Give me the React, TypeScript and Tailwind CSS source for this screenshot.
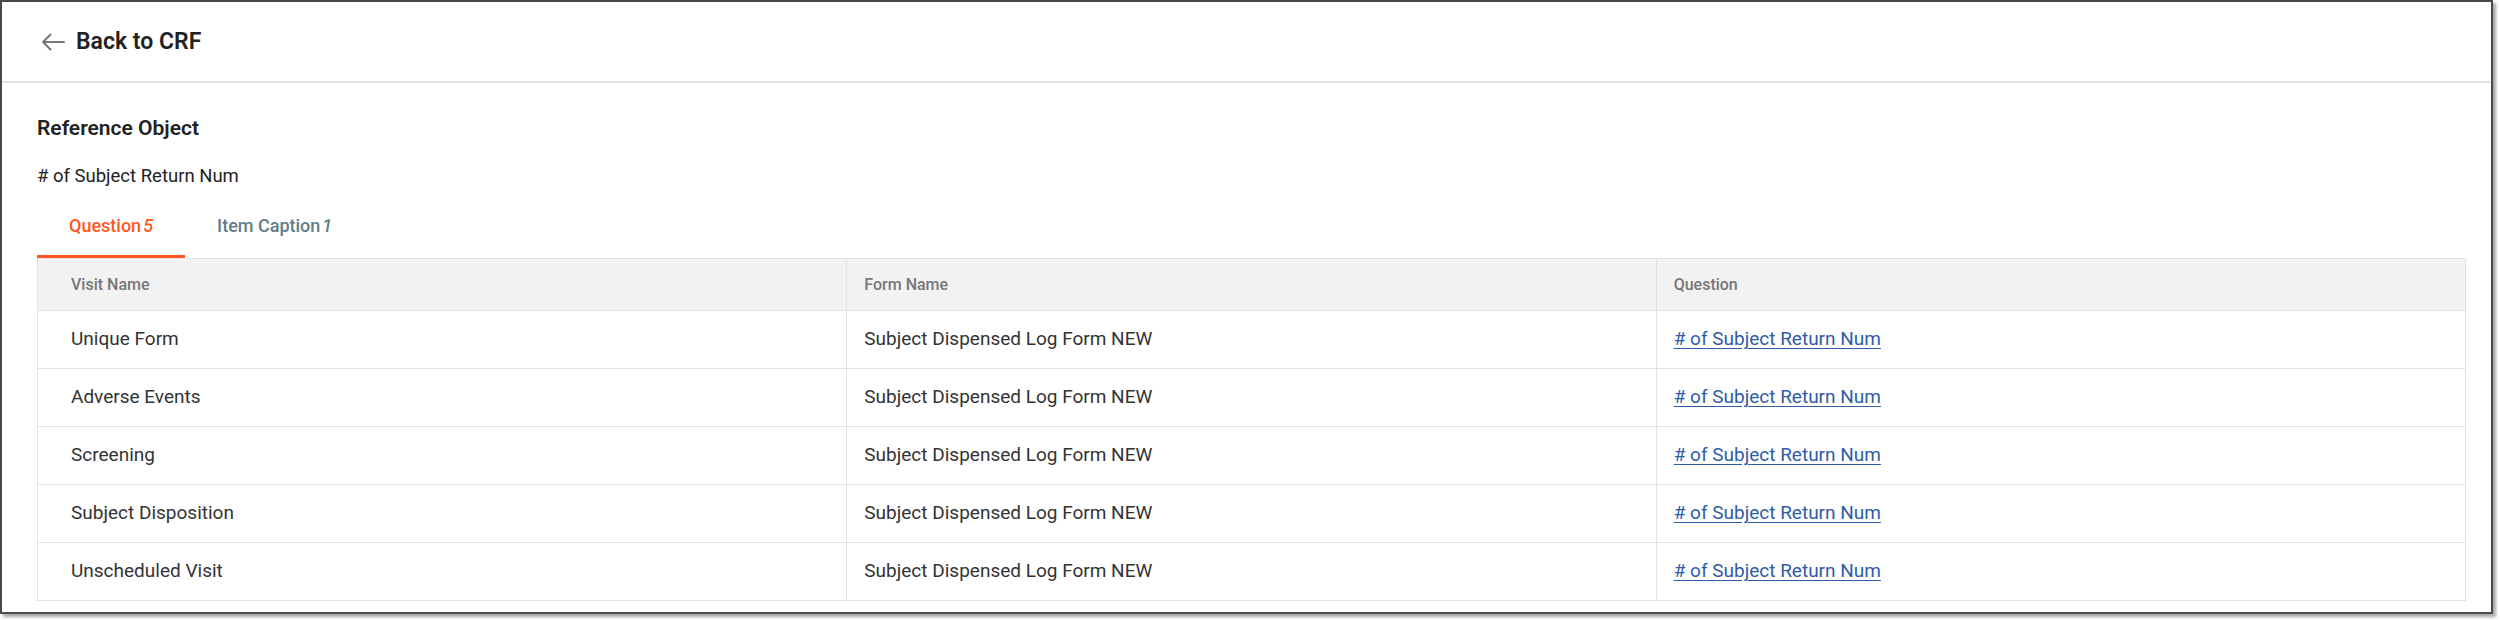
import { useState } from "react";

const rows = [
  { visit: "Unique Form", form: "Subject Dispensed Log Form NEW", question: "# of Subject Return Num" },
  { visit: "Adverse Events", form: "Subject Dispensed Log Form NEW", question: "# of Subject Return Num" },
  { visit: "Screening", form: "Subject Dispensed Log Form NEW", question: "# of Subject Return Num" },
  { visit: "Subject Disposition", form: "Subject Dispensed Log Form NEW", question: "# of Subject Return Num" },
  { visit: "Unscheduled Visit", form: "Subject Dispensed Log Form NEW", question: "# of Subject Return Num" },
];

const tabs = [
  { label: "Question", count: 5 },
  { label: "Item Caption", count: 1 },
];

const BackArrow = () => (
  <svg width="24" height="18" viewBox="0 0 24 18" fill="none" className="shrink-0">
    <path d="M23 9H2.5M9.5 1.5L2 9l7.5 7.5" stroke="#777" strokeWidth="2" strokeLinecap="round" strokeLinejoin="round" />
  </svg>
);

const App = () => {
  const [active, setActive] = useState(0);

  return (
    <div className="w-[2500px] h-[620px] bg-white font-['Roboto',sans-serif]">
      <div className="w-[2493px] h-[614px] border-2 border-[#4a4a4a] bg-white shadow-[3px_3px_3px_rgba(0,0,0,0.35)] flex flex-col">
        {/* Header */}
        <div className="h-[81px] shrink-0 flex items-center gap-[11px] pl-[39px] border-b-2 border-[#e3e3e3]">
          <BackArrow />
          <span className="text-[23px] leading-[28px] font-semibold text-[#222]">Back to CRF</span>
        </div>

        {/* Body */}
        <div className="pl-[35px] pr-[25px] pt-[31px]">
          <h2 className="text-[21px] leading-[28px] font-semibold text-[#222]">Reference Object</h2>
          <p className="mt-[22px] text-[18.5px] leading-[24px] text-[#222]">{"# of Subject Return Num"}</p>

          {/* Tabs */}
          <div className="mt-[10px] flex">
            {tabs.map((tab, index) => (
              <button
                key={tab.label}
                onClick={() => setActive(index)}
                className={
                  index === active
                    ? "px-[32px] pt-[16px] pb-[17px] border-b-[3px] border-[#ff5722] text-[18px] leading-[24px] font-medium text-[#ff5722]"
                    : "px-[32px] pt-[16px] pb-[17px] border-b-[3px] border-transparent text-[18px] leading-[24px] font-medium text-[#607d8b]"
                }
              >
                {tab.label}
                <i className="ml-[2px]">{tab.count}</i>
              </button>
            ))}
          </div>

          {/* Table */}
          <table className="w-full table-fixed border-collapse border border-[#e2e2e2]">
            <thead>
              <tr className="h-[52px] bg-[#f2f2f2] border-b border-[#e2e2e2]">
                <th className="pl-[33px] text-left text-[16px] font-medium text-[#777] border-r border-[#e2e2e2]">Visit Name</th>
                <th className="pl-[17px] text-left text-[16px] font-medium text-[#777] border-r border-[#e2e2e2]">Form Name</th>
                <th className="pl-[17px] text-left text-[16px] font-medium text-[#777]">Question</th>
              </tr>
            </thead>
            <tbody>
              {rows.map((row) => (
                <tr key={row.visit} className="h-[58px] border-b border-[#e2e2e2]">
                  <td className="pl-[33px] text-[19px] text-[#333] border-r border-[#e2e2e2]">{row.visit}</td>
                  <td className="pl-[17px] text-[19px] text-[#333] border-r border-[#e2e2e2]">{row.form}</td>
                  <td className="pl-[17px] text-[19px]">
                    <a href="#" className="text-[#2f5ca8] underline underline-offset-[3px]">{row.question}</a>
                  </td>
                </tr>
              ))}
            </tbody>
          </table>
        </div>
      </div>
    </div>
  );
};

export default App;
